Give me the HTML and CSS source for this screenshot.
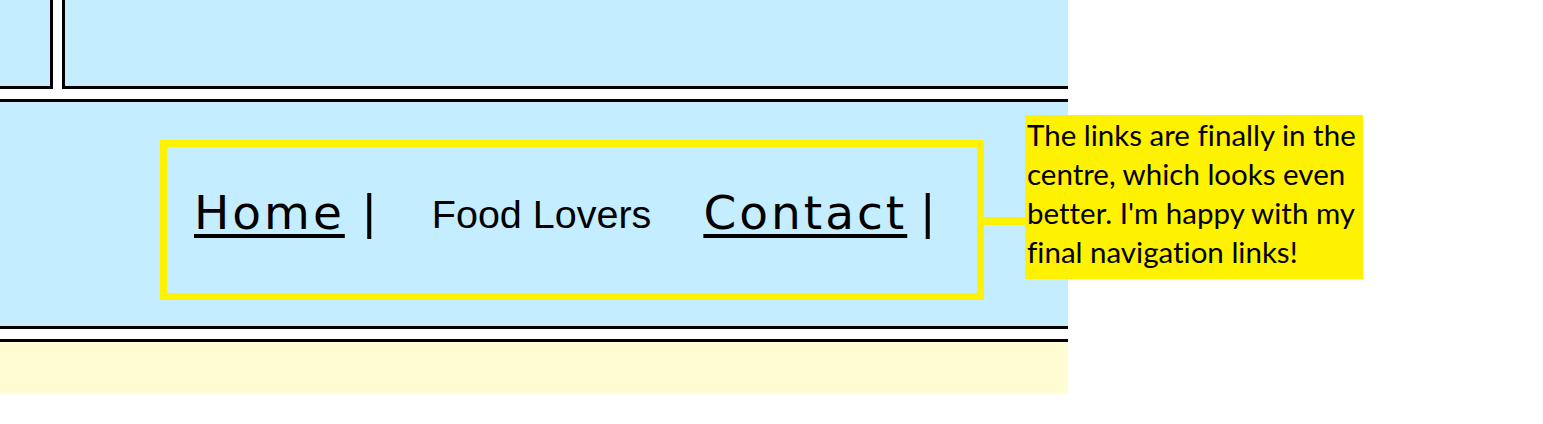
FILE: index.html
```html
<!DOCTYPE html>
<html lang="en">
<head>
<meta charset="utf-8">
<title>Food Lovers navigation</title>
<link rel="stylesheet" href="styles.css">
</head>
<body>
<div class="page">
  <div class="top-row">
    <div class="panel panel-left"></div>
    <div class="panel panel-right"></div>
  </div>
  <header class="nav-section">
    <nav class="nav-box">
      <a class="nav-link" href="#">Home</a><span class="sep">|</span>
      <span class="brand">Food Lovers</span>
      <a class="nav-link" href="#">Contact</a><span class="sep sep-last">|</span>
    </nav>
  </header>
  <footer class="footer"></footer>
</div>
<div class="connector"></div>
<aside class="note">The links are finally in the centre, which looks even better. I'm happy with my final navigation links!</aside>
</body>
</html>
```

FILE: styles.css
```css
html, body {
  margin: 0;
  padding: 0;
  background: #ffffff;
}

body {
  position: relative;
  width: 1543px;
  height: 424px;
  overflow: hidden;
}

.page {
  width: 1068px;
  overflow: hidden;
}

.top-row {
  display: flex;
  gap: 9px;
  height: 89px;
}

.panel {
  background: #c4edff;
  border-bottom: 3px solid #000;
  box-sizing: border-box;
  height: 89px;
}

.panel-left {
  width: 53px;
  border-right: 3px solid #000;
}

.panel-right {
  flex: 1;
  border-left: 3px solid #000;
}

.nav-section {
  margin-top: 10px;
  height: 186px;
  background: #c4edff;
  border-top: 3px solid #000;
  border-bottom: 3px solid #000;
  padding: 38px 0 0 160px;
}

.nav-box {
  width: 824px;
  height: 160px;
  box-sizing: border-box;
  border: 7px solid #fff200;
  display: flex;
  align-items: center;
  padding: 0 0 16px 27px;
}

.nav-link {
  font-family: "DejaVu Sans", sans-serif;
  font-size: 47px;
  letter-spacing: 3px;
  color: #000;
  text-decoration: underline;
  text-decoration-thickness: 4px;
  text-underline-offset: 5px;
}

.sep {
  font-family: "Liberation Sans", sans-serif;
  font-size: 50px;
  color: #000;
  margin-left: 18px;
}

.sep-last {
  margin-left: 14px;
}

.brand {
  font-family: "Liberation Sans", Arial, sans-serif;
  font-size: 39.5px;
  color: #000;
  margin: 4px 52px 0 56px;
}

.footer {
  margin-top: 10px;
  height: 51px;
  background: #fffcd4;
  border-top: 3px solid #000;
}

.connector {
  position: absolute;
  left: 984px;
  top: 217px;
  width: 42px;
  height: 8px;
  background: #fff200;
}

.note {
  position: absolute;
  left: 1025px;
  top: 115px;
  width: 338px;
  height: 164px;
  box-sizing: border-box;
  background: #fff200;
  padding: 0 0 0 2px;
  font-family: Lato, sans-serif;
  font-size: 29.5px;
  font-variant-ligatures: none;
  line-height: 39px;
  color: #000;
}
```
